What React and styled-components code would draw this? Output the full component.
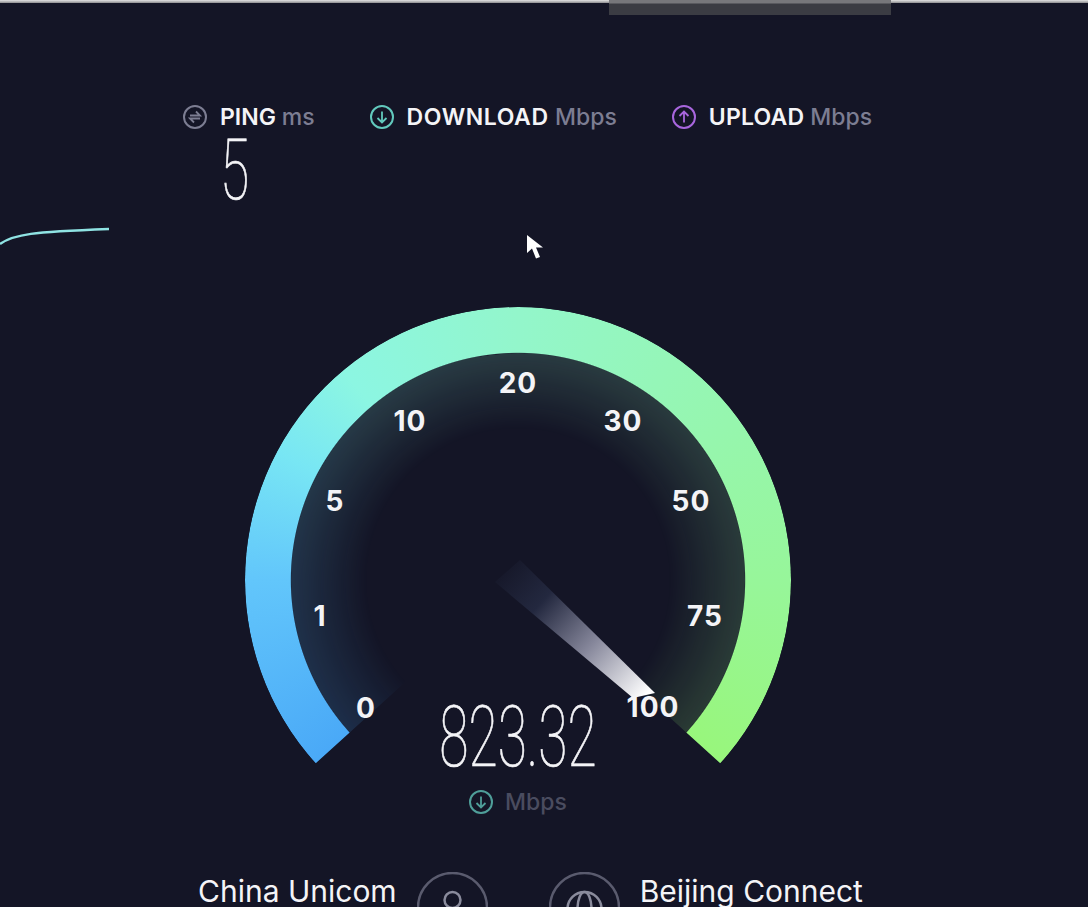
import styled, { createGlobalStyle } from 'styled-components';

const GlobalStyle = createGlobalStyle`
	html, body {
		margin: 0;
		padding: 0;
		background: #141526;
	}
`;

const GAUGE_STOPS = `#4aa9f7 0deg, #62c6fb 42deg, #78e6f4 70deg, #8cf6e2 92deg, #93f6cb 132deg, #96f6ae 185deg, #97f69a 222deg, #98f67c 264deg, #98f67c 312deg, #4aa9f7 312deg`;
const DIAL_CLIP = 'polygon(50% 50%, 0 95.3%, 0 0, 100% 0, 100% 95.3%)';

const Page = styled.div`
	position: relative;
	width: 1088px;
	height: 907px;
	overflow: hidden;
	background: #141526;
	font-family: Inter, 'Liberation Sans', sans-serif;
	color: #f4f4f7;
`;

const TopStrip = styled.div`
	height: 3px;
	background: linear-gradient(#e4e4e4, #8d8d90);
`;

const ScrollThumb = styled.div`
	position: absolute;
	top: 0;
	left: 609px;
	width: 282px;
	height: 15px;
	background: linear-gradient(#77777b 0, #77777b 3px, #3b3c43 4px);
`;

const ResultsRow = styled.div`
	display: flex;
	gap: 55px;
	padding: 102px 0 0 183px;
`;

const ResultHead = styled.div`
	display: flex;
	align-items: center;
	gap: 13px;
	height: 24px;
`;

const ResultLabel = styled.span`
	font-size: 23px;
	font-weight: 600;
	letter-spacing: ${({ $spacing }) => $spacing}px;
	line-height: 24px;
	white-space: nowrap;
`;

const ResultUnit = styled.span`
	font-weight: 500;
	letter-spacing: 0;
	color: #7c7d92;
`;

const ThinDigits = styled.div`
	font-family: Roboto, 'Liberation Sans', sans-serif;
	font-weight: 100;
	font-size: 86px;
	line-height: 1;
	white-space: nowrap;
	-webkit-text-stroke: 0.7px #f4f4f7;
	transform: scaleX(0.62);
`;

const PingValue = styled(ThinDigits)`
	width: 48px;
	height: 65px;
	margin: 8px 0 0 37px;
	line-height: 65px;
	transform-origin: 0 50%;
`;

const Gauge = styled.div`
	position: relative;
	width: 546px;
	height: 456px;
	margin: 105px 0 0 245px;
`;

const GaugeArc = styled.div`
	position: absolute;
	top: 0;
	left: 0;
	width: 546px;
	height: 546px;
	border-radius: 50%;
	background: conic-gradient(from 228deg, ${GAUGE_STOPS});
	mask: radial-gradient(circle closest-side, transparent 83%, #000 83.4%);
	clip-path: ${DIAL_CLIP};
`;

const GaugeGlow = styled.div`
	position: absolute;
	top: 46px;
	left: 46px;
	width: 454px;
	height: 454px;
	border-radius: 50%;
	background: conic-gradient(from 228deg, ${GAUGE_STOPS});
	opacity: 0.17;
	mask: radial-gradient(circle closest-side, transparent 66%, #000 100%);
	clip-path: ${DIAL_CLIP};
`;

const NeedleSvg = styled.svg`
	position: absolute;
	top: 0;
	left: 0;
`;

const Tick = styled.span`
	position: absolute;
	left: ${({ $x }) => $x}px;
	top: ${({ $y }) => $y}px;
	font-size: 28px;
	font-weight: 700;
	line-height: 1;
	letter-spacing: 1px;
	transform: translate(-50%, -50%);
`;

const Reading = styled(ThinDigits)`
	position: absolute;
	top: 387px;
	left: 0;
	width: 546px;
	text-align: center;
`;

const SpeedUnit = styled.div`
	display: flex;
	align-items: center;
	justify-content: center;
	gap: 12px;
	width: 546px;
	height: 24px;
	margin: 27px 0 0 245px;
	font-size: 23px;
	font-weight: 500;
	color: #4a4c5f;
`;

const Connection = styled.div`
	display: flex;
	align-items: flex-start;
	padding: 58px 0 0 198px;
`;

const ConnectionName = styled.span`
	margin-top: 3px;
	font-size: 30px;
	font-weight: 400;
	line-height: 32px;
	white-space: nowrap;
`;

const RoundIcon = styled.svg`
	flex: none;
	margin: 0 ${({ $right }) => $right}px 0 ${({ $left }) => $left}px;
`;

const TraceLine = styled.svg`
	position: absolute;
	top: 220px;
	left: 0;
`;

const Cursor = styled.svg`
	position: absolute;
	top: 234px;
	left: 526px;
`;

const ARROWS = {
	ping: 'M7 10.5h10l-4-4M17 13.5H7l4 4',
	down: 'M12 6.5v11M7.5 13l4.5 4.5 4.5-4.5',
	up: 'M12 17.5v-11M7.5 11L12 6.5l4.5 4.5',
};

const MetricIcon = ({ kind, color }) => (
	<svg width="24" height="24" viewBox="0 0 24 24" fill="none" stroke={color} strokeWidth="2">
		<circle cx="12" cy="12" r="11" />
		<path d={ARROWS[kind]} strokeWidth="1.8" />
	</svg>
);

const TICKS = [
	{ label: '0', x: 121, y: 401 },
	{ label: '1', x: 75, y: 309 },
	{ label: '5', x: 90, y: 194 },
	{ label: '10', x: 165, y: 114 },
	{ label: '20', x: 273, y: 76 },
	{ label: '30', x: 378, y: 114 },
	{ label: '50', x: 446, y: 194 },
	{ label: '75', x: 460, y: 309 },
	{ label: '100', x: 408, y: 400 },
];

const App = () => (
	<Page>
		<GlobalStyle />
		<TopStrip />
		<ScrollThumb />
		<ResultsRow>
			<div>
				<ResultHead>
					<MetricIcon kind="ping" color="#7c7d92" />
					<ResultLabel $spacing={0}>
						PING <ResultUnit>ms</ResultUnit>
					</ResultLabel>
				</ResultHead>
				<PingValue>5</PingValue>
			</div>
			<ResultHead>
				<MetricIcon kind="down" color="#62c9bd" />
				<ResultLabel $spacing={0.6}>
					DOWNLOAD <ResultUnit>Mbps</ResultUnit>
				</ResultLabel>
			</ResultHead>
			<ResultHead>
				<MetricIcon kind="up" color="#a866dd" />
				<ResultLabel $spacing={0.2}>
					UPLOAD <ResultUnit>Mbps</ResultUnit>
				</ResultLabel>
			</ResultHead>
		</ResultsRow>
		<Gauge>
			<GaugeGlow />
			<GaugeArc />
			<NeedleSvg width="546" height="456" viewBox="245 307 546 456">
				<defs>
					<linearGradient id="needleFade" gradientUnits="userSpaceOnUse" x1="507" y1="571" x2="645" y2="696">
						<stop offset="0" stopColor="#17192b" />
						<stop offset="0.25" stopColor="#23283f" />
						<stop offset="0.6" stopColor="#85869a" />
						<stop offset="1" stopColor="#ffffff" />
					</linearGradient>
				</defs>
				<polygon points="520,560 495,582 633,698 655,693" fill="url(#needleFade)" />
			</NeedleSvg>
			{TICKS.map(({ label, x, y }) => (
				<Tick key={label} $x={x} $y={y}>
					{label}
				</Tick>
			))}
			<Reading>823.32</Reading>
		</Gauge>
		<SpeedUnit>
			<MetricIcon kind="down" color="#4f9f9a" />
			Mbps
		</SpeedUnit>
		<Connection>
			<ConnectionName>China Unicom</ConnectionName>
			<RoundIcon $left={20} $right={61} width="71" height="71" viewBox="0 0 71 71" fill="none" stroke="#5a5b6e" strokeWidth="2.5">
				<circle cx="35.5" cy="35.5" r="34.5" />
				<circle cx="35.5" cy="28" r="8" stroke="#8a8b9c" />
			</RoundIcon>
			<RoundIcon $left={0} $right={20} width="71" height="71" viewBox="0 0 71 71" fill="none" stroke="#5a5b6e" strokeWidth="2.5">
				<circle cx="35.5" cy="35.5" r="34.5" />
				<circle cx="35.5" cy="37" r="17" stroke="#8a8b9c" />
				<ellipse cx="35.5" cy="37" rx="7" ry="17" stroke="#8a8b9c" />
			</RoundIcon>
			<ConnectionName>Beijing Connect</ConnectionName>
		</Connection>
		<TraceLine width="110" height="30" viewBox="0 220 110 30" fill="none">
			<path d="M0 244C14 234 32 232 109 229" stroke="#8fe3e3" strokeWidth="2.4" />
		</TraceLine>
		<Cursor width="20" height="28" viewBox="0 0 20 28">
			<path d="M1 1v18l5-4.5 4 10 4-1.5-4-9.5h7z" fill="#fff" />
		</Cursor>
	</Page>
);

export default App;
